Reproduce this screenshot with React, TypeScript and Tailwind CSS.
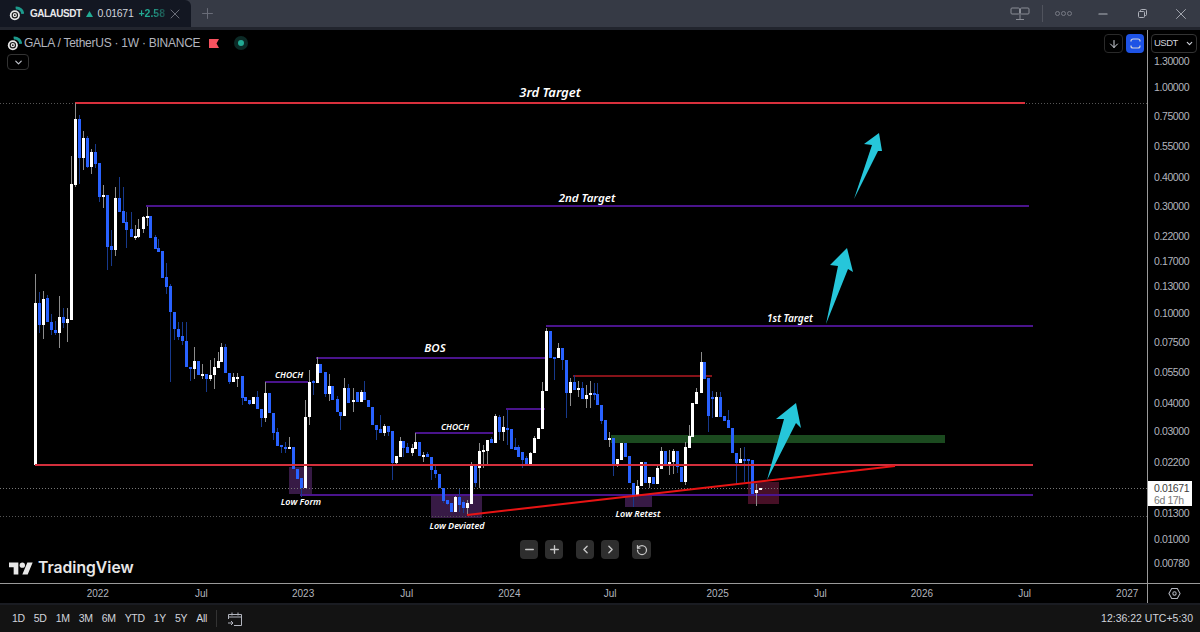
import { ChevronDown, ChevronLeft, ChevronRight, Minus, Plus, RotateCcw, ArrowDown, X } from "lucide-react";

// x, bodyTop, bodyBottom, wickTop, wickBottom, 1 = white candle
type Candle = [number, number, number, number, number, number];

const candles: Candle[] = [
  [35, 303, 465, 274, 465, 1], [39, 303, 325, 292, 333, 0], [43, 299, 325, 291, 339, 1], [47, 298, 322, 295, 322, 0], [51, 322, 330, 314, 335, 0],
  [55, 330, 333, 321, 335, 0], [59, 317, 333, 296, 348, 1], [63, 317, 323, 308, 328, 0], [67, 319, 323, 308, 342, 1],
  [71, 184, 320, 156, 320, 1], [75, 119, 185, 103, 187, 1], [79, 119, 158, 115, 184, 0], [83, 138, 158, 131, 170, 1], [87, 138, 167, 136, 168, 0],
  [91, 152, 167, 149, 174, 1], [95, 152, 164, 144, 168, 0], [99, 163, 197, 163, 202, 0], [103, 195, 196, 185, 208, 1], [107, 195, 247, 195, 270, 0],
  [111, 246, 250, 230, 266, 0], [115, 198, 250, 187, 256, 1], [119, 198, 212, 177, 212, 0], [123, 211, 223, 187, 223, 0], [126, 222, 230, 212, 248, 0],
  [131, 229, 237, 212, 237, 0], [135, 236, 237, 225, 240, 1], [138, 229, 237, 219, 238, 1], [143, 217, 229, 216, 233, 1], [147, 216, 218, 207, 226, 1],
  [150, 216, 238, 216, 238, 0], [155, 237, 249, 235, 249, 0], [158, 248, 252, 239, 252, 0], [162, 251, 278, 251, 278, 0], [166, 277, 287, 263, 294, 0],
  [170, 286, 312, 284, 382, 0], [174, 312, 329, 312, 340, 0], [178, 329, 337, 322, 340, 0], [182, 336, 341, 322, 345, 0], [186, 341, 367, 322, 367, 0],
  [190, 367, 369, 367, 381, 0], [194, 361, 369, 347, 379, 1], [198, 361, 375, 361, 375, 0], [202, 374, 375, 364, 379, 1], [206, 374, 379, 374, 392, 0],
  [210, 375, 379, 360, 381, 1], [214, 367, 375, 358, 389, 1], [218, 361, 368, 352, 368, 1], [221, 347, 362, 343, 362, 1], [225, 347, 373, 344, 373, 0],
  [229, 373, 382, 373, 384, 0], [233, 377, 382, 373, 382, 1], [237, 377, 378, 373, 387, 1], [242, 376, 398, 376, 405, 0], [245, 397, 401, 397, 401, 0],
  [249, 400, 404, 400, 405, 0], [253, 397, 404, 397, 404, 1], [257, 397, 409, 391, 409, 0], [261, 409, 418, 409, 427, 0], [265, 393, 418, 382, 422, 1],
  [269, 393, 413, 393, 413, 0], [273, 413, 433, 413, 440, 0], [277, 432, 446, 428, 446, 0], [281, 445, 447, 445, 453, 0], [285, 447, 448, 442, 453, 0],
  [289, 447, 448, 437, 448, 1], [293, 447, 469, 447, 469, 0], [297, 469, 479, 469, 479, 0], [301, 478, 488, 478, 497, 0], [305, 417, 488, 400, 488, 1],
  [309, 382, 417, 370, 425, 1], [313, 381, 382, 380, 395, 0], [317, 364, 383, 357, 383, 1], [320, 364, 373, 364, 373, 0], [325, 372, 394, 372, 397, 0],
  [329, 386, 394, 374, 401, 1], [332, 386, 400, 386, 400, 0], [337, 399, 412, 396, 412, 0], [340, 412, 416, 412, 430, 0], [344, 388, 416, 378, 416, 1],
  [348, 388, 403, 384, 403, 0], [353, 400, 402, 388, 412, 1], [357, 392, 402, 392, 402, 0], [361, 392, 402, 390, 402, 1], [364, 392, 400, 381, 400, 0],
  [368, 400, 407, 400, 407, 0], [372, 407, 425, 407, 425, 0], [376, 425, 430, 425, 440, 0], [380, 429, 433, 415, 433, 0], [384, 426, 433, 424, 436, 1],
  [388, 426, 432, 426, 436, 0], [392, 431, 463, 431, 480, 0], [396, 456, 463, 456, 466, 1], [400, 441, 457, 437, 457, 1], [403, 441, 448, 441, 457, 0],
  [407, 447, 453, 443, 453, 0], [412, 448, 453, 444, 456, 1], [415, 442, 449, 433, 449, 1], [419, 442, 456, 442, 456, 0], [423, 455, 457, 452, 462, 1],
  [427, 454, 457, 452, 457, 0], [431, 457, 470, 457, 480, 0], [435, 470, 474, 466, 478, 0], [439, 474, 488, 474, 488, 0], [443, 488, 501, 488, 503, 0],
  [447, 500, 504, 500, 505, 0], [451, 503, 512, 503, 512, 0], [455, 497, 512, 496, 512, 1], [459, 497, 505, 489, 512, 0], [463, 502, 508, 500, 513, 0],
  [467, 503, 508, 500, 515, 1], [471, 466, 504, 462, 504, 1], [475, 465, 483, 465, 487, 0], [479, 451, 468, 443, 488, 1], [483, 450, 451, 445, 468, 1],
  [487, 440, 451, 440, 466, 1], [491, 439, 443, 437, 443, 0], [495, 416, 443, 414, 443, 1], [499, 417, 432, 415, 440, 0], [503, 427, 432, 416, 441, 1],
  [507, 428, 429, 410, 445, 0], [511, 429, 449, 429, 449, 0], [515, 447, 450, 438, 450, 0], [518, 447, 457, 445, 457, 0], [522, 452, 460, 452, 468, 0],
  [526, 458, 465, 456, 465, 0], [530, 453, 465, 452, 466, 1], [534, 438, 453, 436, 453, 1], [538, 428, 439, 428, 439, 1], [542, 391, 429, 382, 429, 1],
  [546, 331, 391, 328, 391, 1], [550, 331, 358, 331, 358, 0], [554, 357, 358, 357, 380, 0], [558, 348, 358, 343, 358, 1], [562, 348, 360, 348, 370, 0],
  [566, 360, 393, 360, 418, 0], [570, 382, 393, 378, 406, 1], [574, 382, 390, 375, 390, 0], [578, 388, 390, 381, 397, 1], [582, 388, 399, 382, 399, 0],
  [586, 395, 399, 385, 408, 1], [590, 393, 395, 381, 408, 1], [594, 393, 394, 383, 400, 0], [597, 394, 405, 383, 405, 0], [601, 405, 421, 405, 424, 0],
  [605, 420, 440, 420, 440, 0], [609, 438, 440, 432, 447, 1], [613, 438, 466, 438, 476, 0], [617, 459, 466, 459, 467, 1], [621, 443, 460, 443, 460, 1],
  [625, 443, 457, 443, 457, 0], [629, 456, 483, 456, 483, 0], [633, 483, 495, 483, 507, 0], [637, 486, 495, 480, 495, 1], [641, 462, 486, 462, 486, 1],
  [645, 462, 483, 462, 483, 0], [649, 477, 483, 477, 488, 1], [653, 477, 484, 477, 484, 0], [657, 468, 484, 466, 484, 1], [661, 451, 469, 447, 469, 1],
  [665, 451, 466, 451, 466, 0], [669, 462, 466, 450, 475, 1], [673, 451, 462, 449, 474, 1], [677, 451, 467, 451, 473, 0], [681, 467, 482, 467, 482, 0],
  [685, 447, 482, 442, 485, 1], [689, 436, 448, 425, 448, 1], [692, 403, 437, 403, 437, 1], [696, 392, 404, 388, 404, 1], [701, 362, 393, 352, 393, 1],
  [704, 362, 379, 362, 379, 0], [708, 378, 416, 378, 432, 0], [712, 397, 398, 391, 418, 0], [716, 397, 417, 392, 417, 1], [720, 397, 417, 392, 417, 0],
  [724, 416, 421, 416, 421, 0], [728, 420, 428, 410, 428, 0], [732, 428, 453, 428, 453, 0], [736, 453, 463, 453, 485, 0], [740, 459, 463, 448, 463, 1],
  [744, 459, 460, 447, 482, 0], [748, 459, 461, 459, 482, 0], [752, 460, 494, 460, 494, 0], [756, 490, 493, 484, 506, 1], [760, 488, 490, 488, 490, 1],
];

const axisPrices: [string, number][] = [
  ["1.30000", 60], ["1.00000", 86], ["0.75000", 115], ["0.55000", 145], ["0.40000", 176], ["0.30000", 205], ["0.22000", 235],
  ["0.17000", 260], ["0.13000", 285], ["0.10000", 312], ["0.07500", 341], ["0.05500", 371], ["0.04000", 402], ["0.03000", 430],
  ["0.02200", 461], ["0.01300", 512], ["0.01000", 538], ["0.00780", 562],
];

const axisTimes: [string, number][] = [
  ["2022", 98], ["Jul", 202], ["2023", 304], ["Jul", 408], ["2024", 511], ["Jul", 612], ["2025", 720], ["Jul", 823], ["2026", 925], ["Jul", 1028], ["2027", 1131],
];

const ranges = ["1D", "5D", "1M", "3M", "6M", "YTD", "1Y", "5Y", "All"];

function GalaLogo({ size }: { size: number }) {
  return (
    <svg width={size} height={size} viewBox="0 0 18 18" aria-hidden="true">
      <path d="M8 2.5a7.5 7.5 0 0 1 8.5 7" fill="none" stroke="#1d9a8c" strokeWidth="3.5" />
      <circle cx="7" cy="11" r="6" fill="#e8e8e8" />
      <circle cx="7" cy="11" r="3.2" fill="none" stroke="#1a1a1a" strokeWidth="1.4" />
      <circle cx="7" cy="11" r="1" fill="#1a1a1a" />
    </svg>
  );
}

function Chart() {
  const label = "fill-white font-semibold italic";
  return (
    <svg viewBox="0 0 1147 553" className="block h-[553px] w-[1147px]" aria-hidden="true">
      <g transform="translate(0 -30)" style={{ fontFamily: '"Noto Sans", sans-serif' }}>
        <rect x="289" y="467" width="23" height="27" fill="#371a45" />
        <rect x="431" y="496" width="51" height="22" fill="#371a45" />
        <rect x="625" y="496" width="27" height="11" fill="#371a45" />
        <rect x="748" y="482" width="31" height="22" fill="#471026" />
        <rect x="611" y="435" width="334" height="8" fill="#1b4a1f" />

        <line x1="0" x2="1147" y1="103.5" y2="103.5" stroke="#555" strokeDasharray="1 2" />
        <line x1="0" x2="1147" y1="488.5" y2="488.5" stroke="#777" strokeDasharray="1 2" />
        <line x1="0" x2="1147" y1="516.5" y2="516.5" stroke="#555" strokeDasharray="1 2" />

        <g stroke="#4a148c" strokeWidth="2">
          <line x1="146" x2="1029" y1="206" y2="206" />
          <line x1="546" x2="1033" y1="326" y2="326" />
          <line x1="316" x2="546" y1="358" y2="358" />
          <line x1="265" x2="308" y1="382" y2="382" />
          <line x1="415" x2="493" y1="433" y2="433" />
          <line x1="506" x2="545" y1="409" y2="409" />
          <line x1="300" x2="1033" y1="495" y2="495" />
        </g>
        <line x1="75" x2="1025" y1="103" y2="103" stroke="#d9303c" strokeWidth="2" />
        <line x1="573" x2="712" y1="376" y2="376" stroke="#b31a22" strokeWidth="1.5" />

        <g shapeRendering="crispEdges">
          {candles.map(([x, top, bottom, wickTop, wickBottom, up], i) => (
            <g key={i}>
              <rect x={x} y={wickTop} width="1" height={wickBottom - wickTop} fill={up ? "#8c8c8c" : "#17398c"} />
              <rect x={x - 1} y={top} width="3" height={Math.max(bottom - top, 2)} fill={up ? "#ffffff" : "#2962ff"} />
            </g>
          ))}
        </g>

        <line x1="35" x2="1033" y1="465" y2="465" stroke="#d32f3c" strokeWidth="2" />
        <line x1="467" x2="895" y1="515" y2="466" stroke="#e81414" strokeWidth="2" />

        <polygon points="854,199 872,145 864,144 879,133 882,151 878,151" fill="#26c6da" />
        <polygon points="826,324 838,266 830,265 847,248 853,272 848,269" fill="#26c6da" />
        <polygon points="767,480 784,419 776,419 796,403 801,428 796,423" fill="#26c6da" />

        <text x="550" y="97" textAnchor="middle" fontSize="13" className={label}>3rd Target</text>
        <text x="587" y="202" textAnchor="middle" fontSize="11.5" className={label}>2nd Target</text>
        <text x="790" y="322" textAnchor="middle" fontSize="10" className={label}>1st Target</text>
        <text x="435" y="352" textAnchor="middle" fontSize="11.5" className={label}>BOS</text>
        <text x="289" y="378" textAnchor="middle" fontSize="8.5" className={label}>CHOCH</text>
        <text x="455" y="430" textAnchor="middle" fontSize="8.5" className={label}>CHOCH</text>
        <text x="301" y="505" textAnchor="middle" fontSize="9" className={label}>Low Form</text>
        <text x="457" y="529" textAnchor="middle" fontSize="9" className={label}>Low Deviated</text>
        <text x="638" y="517" textAnchor="middle" fontSize="9" className={label}>Low Retest</text>
      </g>
    </svg>
  );
}

function PriceAxis() {
  return (
    <div className="relative h-full w-[53px] border-l border-[#9a9a9a] bg-black">
      <div className="flex h-[26px] items-start pl-[3px] pr-[3px] pt-[4px]">
        <div className="flex h-[19px] w-full items-center justify-between rounded border border-[#333] pl-[2px] pr-[2px] text-[9.5px] tracking-[-0.5px] text-[#d1d4dc]">
          USDT
          <ChevronDown size={9} strokeWidth={3} />
        </div>
      </div>
      <div className="flex flex-col text-[10.5px] leading-[14px] tracking-[-0.4px] text-[#b2b5be]">
        {axisPrices.map(([price, y], i) => (
          <div key={price} className="pl-[6px]" style={{ marginTop: i === 0 ? -2 : y - axisPrices[i - 1][1] - 14 }}>
            {price}
          </div>
        ))}
      </div>
      <div className="absolute left-0 top-[451px] h-[25px] w-[44px] bg-white pl-[6px] pt-[1px] text-[10.5px] leading-[12px] tracking-[-0.4px] text-[#3c3c3c]">
        <div>0.01671</div>
        <div className="text-[#777]">6d 17h</div>
      </div>
    </div>
  );
}

export default function App() {
  return (
    <div className="flex h-[632px] w-[1200px] flex-col overflow-hidden bg-[#1a1c22] font-['Liberation_Sans',sans-serif] text-[#d1d4dc]">
      {/* title bar */}
      <div className="flex h-[27px] shrink-0 items-center bg-[#363a45]">
        <div className="flex h-full w-[191px] items-center rounded-tr-md bg-[#131722] pl-[9px]">
          <GalaLogo size={15} />
          <span className="ml-[6px] text-[10px] font-bold tracking-[-0.5px] text-[#e8e8ea]">GALAUSDT</span>
          <svg width="7" height="6" viewBox="0 0 7 6" className="ml-[4px]" aria-hidden="true">
            <path d="M3.5 0 7 6H0z" fill="#22ab94" />
          </svg>
          <span className="ml-[5px] text-[10.5px] tracking-[-0.3px] text-[#d1d4dc]">0.01671</span>
          <span className="ml-[5px] bg-gradient-to-r from-[#22ab94] via-[#22ab94] to-[#1a4a48] bg-clip-text text-[10.5px] font-bold text-transparent">
            +2.58
          </span>
          <X size={16} strokeWidth={1.3} className="ml-[2px] text-[#787b86]" />
        </div>
        <Plus size={17} className="ml-[8px] text-[#6a6d78]" strokeWidth={1.4} />
        <div className="ml-auto flex items-center text-[#aeb1ba]">
          <svg width="20" height="13" viewBox="0 0 20 13" fill="none" stroke="#8a8d96" strokeWidth="1" aria-hidden="true">
            <rect x="1" y="1" width="8.5" height="6" rx="1" />
            <rect x="10.5" y="1" width="8.5" height="6" rx="1" />
            <path d="M10 7v5.5M6 12.5h8" />
          </svg>
          <div className="ml-[12px] h-[17px] w-px bg-[#50535d]" />
          <div className="ml-[12px] flex gap-[1px]">
            <span className="h-[5px] w-[5px] rounded-full border border-[#777a84]" />
            <span className="h-[5px] w-[5px] rounded-full border border-[#777a84]" />
            <span className="h-[5px] w-[5px] rounded-full border border-[#777a84]" />
          </div>
          <Minus size={14} className="ml-[24px]" />
          <svg width="9" height="9" viewBox="0 0 9 9" fill="none" stroke="currentColor" strokeWidth="1" className="ml-[28px]" aria-hidden="true">
            <rect x="0.5" y="2.5" width="6" height="6" rx="1" />
            <path d="M2.5 2.5v-1a1 1 0 0 1 1-1h4a1 1 0 0 1 1 1v4a1 1 0 0 1-1 1h-1" />
          </svg>
          <X size={18} strokeWidth={1.2} className="ml-[25px] mr-[10px]" />
        </div>
      </div>
      <div className="h-[3px] shrink-0 bg-[#22252e]" />

      {/* chart and price scale */}
      <div className="flex h-[553px] shrink-0 bg-black">
        <div className="relative h-full w-[1147px]">
          <Chart />
          <div className="absolute left-[7px] top-[5px]">
            <div className="flex h-[16px] items-center text-[12px] tracking-[-0.25px] text-[#b2b5be]">
              <GalaLogo size={15} />
              <span className="ml-[2px]">GALA / TetherUS · 1W · BINANCE</span>
              <svg width="10" height="9" viewBox="0 0 10 9" className="ml-[9px]" aria-hidden="true">
                <path d="M0 0h10L7.5 4.5 10 9H0z" fill="#f7525f" />
              </svg>
              <span className="ml-[15px] flex h-[14px] w-[14px] items-center justify-center rounded-full bg-[#0b2a26]">
                <span className="h-[6px] w-[6px] rounded-full bg-[#22ab94]" />
              </span>
            </div>
            <div className="mt-[3px] flex h-[16px] w-[22px] items-center justify-center rounded border border-[#333] text-[#c5c8d0]">
              <ChevronDown size={11} strokeWidth={2.5} />
            </div>
          </div>
          <div className="absolute right-[3px] top-[4px] flex gap-[3px]">
            <div className="flex h-[19px] w-[19px] items-center justify-center rounded border border-[#2a2a2a] text-[#d1d4dc]">
              <ArrowDown size={12} />
            </div>
            <div className="flex h-[19px] w-[18px] items-center justify-center rounded bg-[#1e53e5] text-[#d1d4dc]">
              <svg width="11" height="11" viewBox="0 0 11 11" fill="none" stroke="currentColor" strokeWidth="1.2" aria-hidden="true">
                <path d="M1 3.5V3a2 2 0 0 1 2-2h5a2 2 0 0 1 2 2v.5M1 7.5V8a2 2 0 0 0 2 2h5a2 2 0 0 0 2-2v-.5" />
              </svg>
            </div>
          </div>
          <div className="absolute left-[9px] top-[526px] flex h-[24px] items-center gap-[5px]">
            <svg width="24" height="13" viewBox="0 4 36 18" fill="#e8e8e8" aria-hidden="true">
              <path d="M14 22H7V11H0V4h14v18zM28 22h-8l7.5-18h8L28 22z" />
              <circle cx="20" cy="8" r="4" />
            </svg>
            <span className="font-['Inter',sans-serif] text-[15.7px] font-semibold text-[#e8e8e8]">TradingView</span>
          </div>
          <div className="absolute left-[520px] top-[510px] flex text-[#c8c8c8]">
            <div className="flex h-[19px] w-[18px] items-center justify-center rounded bg-[#2e2e2e]"><Minus size={13} strokeWidth={2.5} /></div>
            <div className="ml-[7px] flex h-[19px] w-[18px] items-center justify-center rounded bg-[#2e2e2e]"><Plus size={13} strokeWidth={2.5} /></div>
            <div className="ml-[13px] flex h-[19px] w-[18px] items-center justify-center rounded bg-[#2e2e2e]"><ChevronLeft size={13} strokeWidth={2.5} /></div>
            <div className="ml-[7px] flex h-[19px] w-[18px] items-center justify-center rounded bg-[#2e2e2e]"><ChevronRight size={13} strokeWidth={2.5} /></div>
            <div className="ml-[13px] flex h-[19px] w-[19px] items-center justify-center rounded bg-[#2e2e2e]"><RotateCcw size={12} strokeWidth={2.5} /></div>
          </div>
        </div>
        <PriceAxis />
      </div>

      {/* time scale */}
      <div className="flex h-[20px] shrink-0 border-t border-[#9a9a9a] bg-black">
        <div className="flex w-[1147px] items-center text-[10px] text-[#b2b5be]">
          {axisTimes.map(([t, x], i) => (
            <span
              key={i}
              className="w-[40px] text-center"
              style={{ marginLeft: i === 0 ? x - 20 : x - axisTimes[i - 1][1] - 40 }}
            >
              {t}
            </span>
          ))}
        </div>
        <div className="flex w-[53px] items-center justify-center border-l border-[#9a9a9a]">
          <svg width="13" height="13" viewBox="0 0 14 14" fill="none" stroke="#b2b5be" strokeWidth="1.1" aria-hidden="true">
            <path d="M4 1.5h6L13 7l-3 5.5H4L1 7z" />
            <circle cx="7" cy="7" r="1.8" />
          </svg>
        </div>
      </div>

      {/* bottom toolbar */}
      <div className="mt-[2px] flex h-[27px] shrink-0 items-center bg-[#131313] text-[10.5px] tracking-[-0.3px] text-[#d1d4dc]">
        <div className="flex items-center gap-[9px] pl-[12px]">
          {ranges.map((r) => (
            <span key={r}>{r}</span>
          ))}
        </div>
        <div className="ml-[9px] h-[17px] w-px bg-[#333]" />
        <svg width="16" height="16" viewBox="0 0 16 16" fill="none" stroke="#b2b5be" strokeWidth="1" className="ml-[10px]" aria-hidden="true">
          <path d="M1.5 8V3.5h13v11H7M1.5 6h13M5 1.5v3M11 1.5v3M1 12h4.5M4 10l2 2-2 2" />
        </svg>
        <span className="ml-auto mr-[7px] text-[10.5px] tracking-normal text-[#d1d4dc]">12:36:22 UTC+5:30</span>
      </div>
    </div>
  );
}
